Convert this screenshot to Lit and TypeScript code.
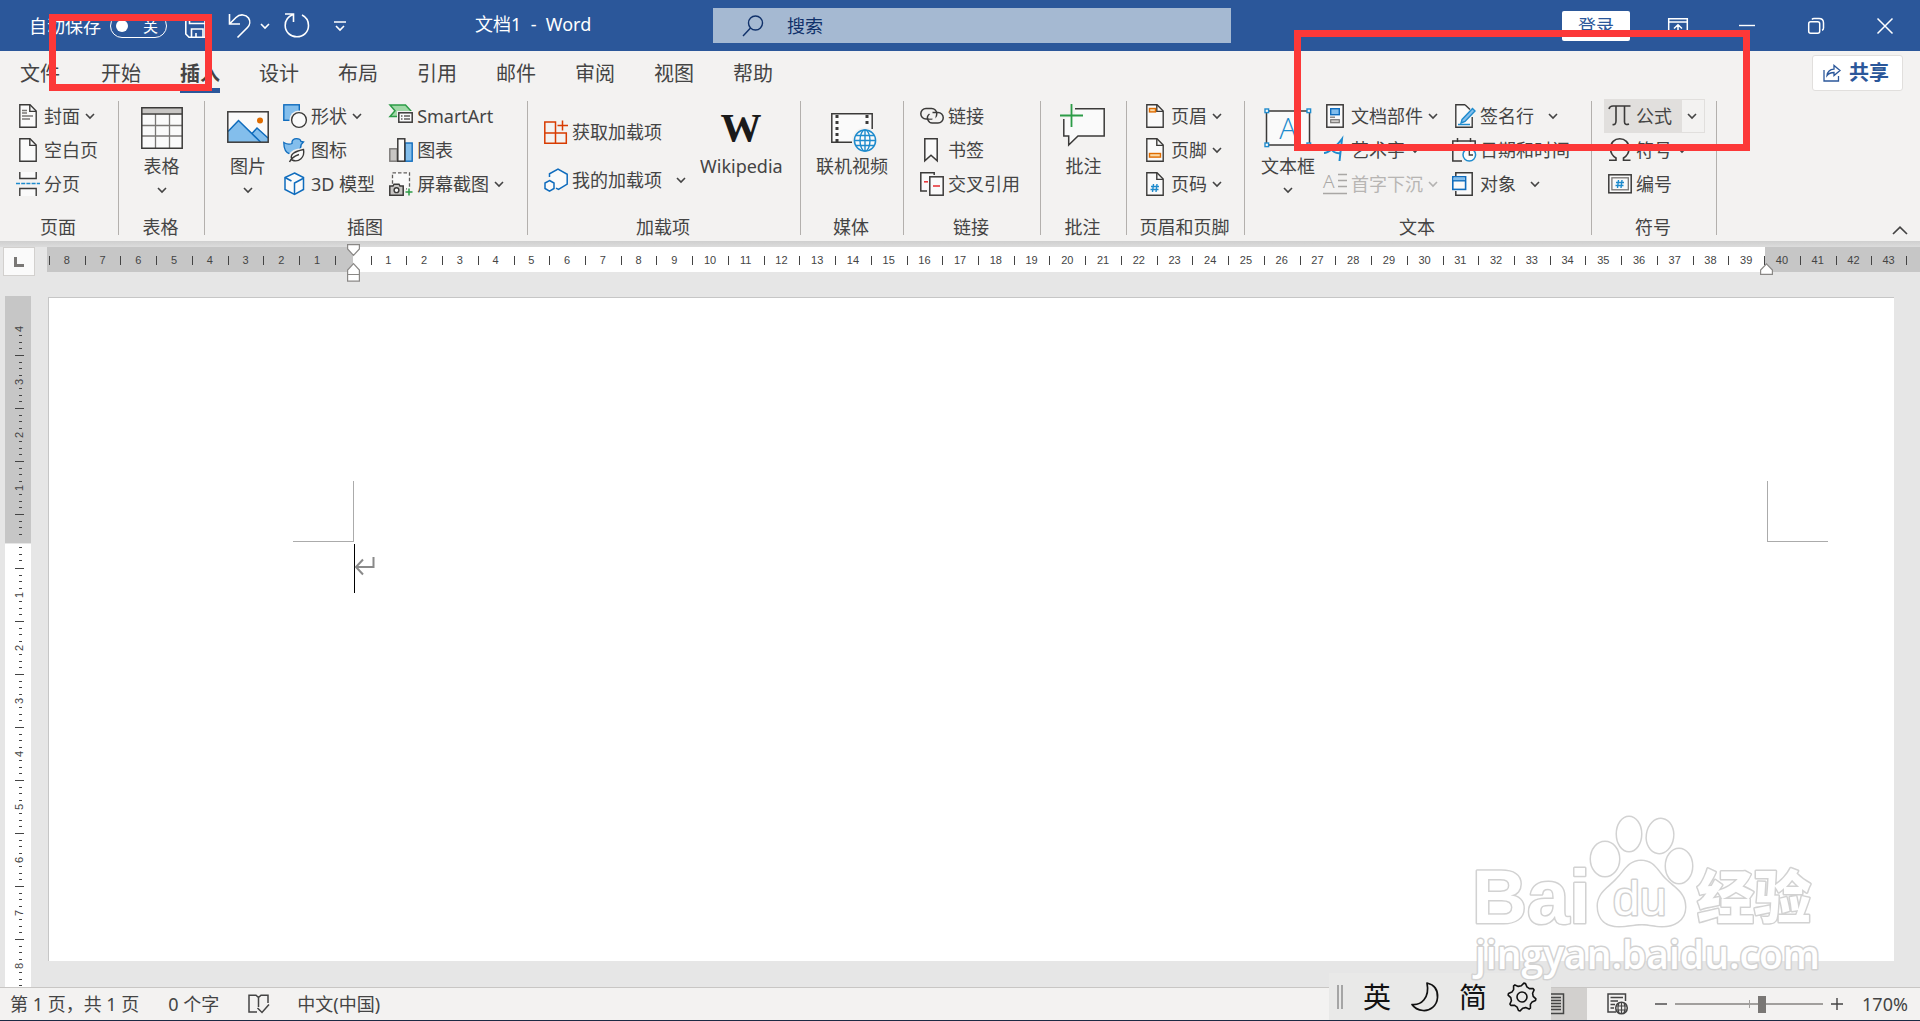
import { LitElement, html, svg, css, nothing, TemplateResult } from "lit";
import { customElement, state } from "lit/decorators.js";

type Svg = TemplateResult<2>;

interface Command {
  icon: Svg;
  text: string;
  menu?: boolean;
  wideMenu?: boolean;
  disabled?: boolean;
}

const draw = (w: number, h: number, body: unknown, cls = "") => html`
  <svg class=${cls} width=${w} height=${h} viewBox="0 0 ${w} ${h}" fill="none" aria-hidden="true">${body}</svg>
`;

const chevron = () => draw(10, 6, svg`<path d="M1 1 L5 5 L9 1" stroke="#444" stroke-width="1.6"/>`, "chev");

const sheet = svg`<path d="M3.8 .8 H14 L20.2 7 V23.2 H3.8 Z" fill="#fafafa" stroke="#3b3a39" stroke-width="1.4"/><path d="M13.8 1 V7.4 H20" stroke="#3b3a39" stroke-width="1.4"/>`;
const hash = (x: number, y: number) => svg`<path d="M${x + 2.5} ${y} l-1 8 M${x + 6} ${y} l-1 8 M${x} ${y + 2.5} h8 M${x - 0.5} ${y + 5.5} h8" stroke="#1e8bcd" stroke-width="1.4"/>`;

const icons = {
  cover: svg`${sheet}<path d="M6 6.5 h5 M6 9 h5 M6 12 h11 M6 15 h8" stroke="#797775" stroke-width="1.4"/>`,
  blank: sheet,
  pageBreak: svg`<path d="M3.8 0 V6.5 H20.2 V0 M3.8 24 V16.5 H20.2 V24" fill="#fafafa" stroke="#3b3a39" stroke-width="1.4"/><path d="M0 11.5 H24" stroke="#1e8bcd" stroke-width="1.6" stroke-dasharray="4 1.2"/>`,
  shapes: svg`<rect x=".8" y=".8" width="15.5" height="15.5" fill="#83beec" stroke="#0f6cbd" stroke-width="1.4"/><circle cx="16" cy="16" r="9.6" fill="#f3f2f1"/><circle cx="16" cy="16" r="7.4" fill="#fafafa" stroke="#3b3a39" stroke-width="1.4"/>`,
  pictos: svg`<path d="M.8 4.5 C4 6.5 7 6.5 9 5.5 C8.5 2 11 .7 13.5 .7 C16 .7 17.6 2 18 3.5 L20.5 4 L18.2 6.5 C18 12 13 16 7 16 C3 15 .8 11 .8 4.5 Z" fill="#83beec" stroke="#0f6cbd" stroke-width="1.3"/><path d="M5 24 C4 15 9 10 22 10 V17 C21 23 14 25 9 22 Z" fill="#f3f2f1"/><path d="M9 22 C6 16 12 13.5 20.5 11.5 C22 19 16 25 9 22 Z M6.5 24 C8 20.5 11.5 18 16 16.5" fill="#fafafa" stroke="#3b3a39" stroke-width="1.4"/>`,
  cube: svg`<path d="M11.5 1 L20.5 5.5 V17.5 L11.5 22.5 L2 17.5 V5.5 Z" fill="#fafafa" stroke="#0f6cbd" stroke-width="1.5"/><path d="M2 5.5 L8.5 9 M11.5 22 V11 L20 6.5" stroke="#0f6cbd" stroke-width="1.5"/>`,
  smartArt: svg`<path d="M1 1 H16.5 L22 7 V9 H9 V12.5 H1 L6 6.8 Z" fill="#9fd8a6" stroke="#2c9c47" stroke-width="1.5"/><rect x="8" y="7" width="16" height="12" fill="#f3f2f1"/><rect x="9.8" y="8.8" width="13.4" height="9.4" fill="#fafafa" stroke="#3b3a39" stroke-width="1.5"/><path d="M12 12 h1.5 M15 12 h6 M12 15 h1.5 M15 15 h6" stroke="#605e5c" stroke-width="1.3"/>`,
  chart: svg`<rect x=".8" y="10.8" width="7.4" height="12.4" fill="#c8c6c4" stroke="#797775" stroke-width="1.4"/><rect x="16" y="5" width="7.2" height="18.2" fill="#83beec" stroke="#0f6cbd" stroke-width="1.4"/><rect x="8.8" y=".8" width="7" height="22.4" fill="#fafafa" stroke="#3b3a39" stroke-width="1.5"/>`,
  screenshot: svg`<rect x="3.5" y=".8" width="17" height="16" fill="#fafafa" stroke="#605e5c" stroke-width="1.3" stroke-dasharray="3.5 2"/><path d="M.8 14 H4 L5 12.2 H10 L11 14 H14.2 V23.2 H.8 Z" fill="#c8c6c4" stroke="#3b3a39" stroke-width="1.5"/><circle cx="7.5" cy="18.2" r="2.4" fill="#fafafa" stroke="#3b3a39" stroke-width="1.4"/><path d="M20 16 V24 M16 20 H24" stroke="#f3f2f1" stroke-width="4"/><path d="M20 16.5 V23.5 M16.5 20 H23.5" stroke="#2c9c47" stroke-width="1.5"/>`,
  getAddins: svg`<path d="M.8 2 H11.5 V13 H22.3 V23.3 H.8 Z M.8 13 H11.5 V23.3" stroke="#d83b01" stroke-width="1.5"/><path d="M18.5 .5 V10.5 M13.5 5.5 H24" stroke="#d83b01" stroke-width="1.5"/>`,
  myAddins: svg`<path d="M5.5 9 V5.5 L14 1 L23 6.5 V16 L14.5 21.5 L12 20" fill="#fafafa"/><path d="M5.5 9 V5.8 L14 1 L23.2 6.3 V16.2 L14.5 21.5 L12 20.2" stroke="#0f6cbd" stroke-width="1.5"/><path d="M5.5 12.5 L10 15 V20.5 L5.5 23.2 L1 20.5 V15 Z" fill="#fafafa" stroke="#0f6cbd" stroke-width="1.5"/>`,
  link: svg`<rect x=".8" y="4.5" width="16" height="10.5" rx="5.2" stroke="#3b3a39" stroke-width="1.5"/><path d="M8.5 13 H14 V17" stroke="#f3f2f1" stroke-width="3"/><path d="M12.5 8.5 H18 A5 5 0 0 1 18 19 H13 A5 5 0 0 1 9.5 10" stroke="#3b3a39" stroke-width="1.5"/>`,
  bookmark: svg`<path d="M4.8 .8 H17.2 V22.8 L11 17.2 L4.8 22.8 Z" fill="#fafafa" stroke="#3b3a39" stroke-width="1.5"/>`,
  crossRef: svg`<path d="M7 19 H.8 V.8 H14.2 V3" fill="#fafafa" stroke="#3b3a39" stroke-width="1.5"/><path d="M4 9.8 h4" stroke="#e8383b" stroke-width="1.6"/><rect x="9.8" y="4.8" width="13.4" height="18.4" fill="#fafafa" stroke="#3b3a39" stroke-width="1.5"/><path d="M13 14 h7" stroke="#e8383b" stroke-width="1.6"/>`,
  header: svg`${sheet}<rect x="6.5" y="4.5" width="6" height="3.4" fill="#fbd9a5" stroke="#df6c00" stroke-width="1.4"/>`,
  footer: svg`${sheet}<rect x="6.5" y="15.5" width="11" height="3.6" fill="#fbd9a5" stroke="#df6c00" stroke-width="1.4"/>`,
  pageNumber: svg`${sheet}${hash(8, 12)}`,
  docParts: svg`<rect x="3.8" y=".8" width="16.4" height="22.4" fill="#fafafa" stroke="#3b3a39" stroke-width="1.5"/><rect x="7.7" y="4.7" width="8.6" height="6" fill="#83beec" stroke="#0f6cbd" stroke-width="1.4"/><path d="M7 13.2 h5" stroke="#797775" stroke-width="1.3"/><rect x="7.7" y="15.7" width="8.6" height="3" fill="#d2d0ce" stroke="#797775" stroke-width="1.2"/>`,
  wordArt: svg`<path d="M1 15 C5 15 14 8 19 1 L16.5 23 M7 10 C10 14 14 16 18 15" stroke="#1e8bcd" stroke-width="2"/>`,
  dropCap: svg`<text x="0" y="16" font-family="Noto Sans" font-weight="300" font-size="19" fill="#a19f9d">A</text><path d="M15 2.5 H24 M15 8.5 H24 M15 14.5 H24 M0 21.5 H24" stroke="#a19f9d" stroke-width="1.4"/>`,
  signature: svg`<path d="M13 .8 H3.8 V23.2 H20.2 V13 M13 .8 L18 5.5" fill="#fafafa" stroke="#3b3a39" stroke-width="1.4"/><path d="M10 15.5 L20.5 4.5 L23 7 L13 17.5 L9 19 Z" fill="#83beec" stroke="#1e8bcd" stroke-width="1.4"/><path d="M6 20.5 H18" stroke="#1e8bcd" stroke-width="1.5"/>`,
  dateTime: svg`<path d="M10 23 H.8 V3 H23.2 V12 M.8 7.5 H23.2 M5.5 0 V4 M18.5 0 V4" stroke="#3b3a39" stroke-width="1.5"/><circle cx="17.3" cy="16.8" r="6.3" fill="#fafafa" stroke="#1e8bcd" stroke-width="1.5"/><path d="M17.3 12.5 V17 H21" stroke="#3b3a39" stroke-width="1.3"/>`,
  object: svg`<path d="M3.8 4 V.8 H20.2 V23.2 H3.8 V19" fill="#fafafa" stroke="#3b3a39" stroke-width="1.5"/><rect x=".8" y="4.8" width="12.8" height="12.6" fill="#fafafa" stroke="#0f6cbd" stroke-width="1.6"/><rect x="1.6" y="5.6" width="11.2" height="3" fill="#83beec"/><path d="M.8 8.8 H13.6" stroke="#0f6cbd" stroke-width="1.4"/>`,
  equation: svg`<path d="M1 5 C1.5 2.5 3 2 5 2 H22.5 M8 2 V17 C8 20 6.5 21 4.5 20.5 M16.5 2 V18 C16.5 20.5 18.5 21 21 20" stroke="#3b3a39" stroke-width="1.6"/>`,
  symbol: svg`<path d="M1 22.2 H8 V20 C3 17 2.5 13 2.5 10.5 C2.5 4.5 6.5 .8 11.7 .8 C17 .8 21 4.5 21 10.5 C21 13 20.5 17 15.5 20 V22.2 H22.5" stroke="#3b3a39" stroke-width="1.6"/>`,
  numbering: svg`<rect x=".8" y="2.8" width="22.4" height="18" fill="#fafafa" stroke="#3b3a39" stroke-width="1.5"/><rect x="3.9" y="5.8" width="16.4" height="12" stroke="#797775" stroke-width="1.3"/>${hash(8, 8)}`,
};

const bigIcons = {
  table: svg`<rect x="3.8" y="8.8" width="40.4" height="40.4" fill="#fafafa"/><rect x="4" y="9" width="40" height="5.5" fill="#c8c6c4"/><path d="M4 26.5 H44 M4 37 H44 M17.5 15 V49 M31.5 15 V49" stroke="#797775" stroke-width="1.3"/><path d="M3.8 8.8 H44.2 V49.2 H3.8 Z M4 15 H44" stroke="#3b3a39" stroke-width="1.5"/>`,
  picture: svg`<rect x="3.8" y="12.8" width="40.4" height="30.4" fill="#fafafa"/><path d="M4 32.5 L14.5 21.5 L28 34.5 L33 29 L44 39 V43 H4 Z" fill="#83beec"/><path d="M4 32.5 L14.5 21.5 L36.5 43 M28 34.5 L33 29 L44 39" stroke="#0f6cbd" stroke-width="1.5"/><circle cx="36" cy="21.5" r="3" fill="#df6c00"/><rect x="3.8" y="12.8" width="40.4" height="30.4" stroke="#3b3a39" stroke-width="1.5"/>`,
  wikipedia: svg`<text x="24" y="42" text-anchor="middle" font-family="Liberation Serif" font-weight="700" font-size="41" fill="#1a1a1a">W</text>`,
  video: svg`<path d="M23 43.5 H3.8 V14.8 H44.2 V30" fill="#fafafa"/><path d="M24 43.2 H3.8 V14.8 H44.2 V30" stroke="#3b3a39" stroke-width="1.5"/><path d="M9 16 V43" stroke="#3b3a39" stroke-width="3" stroke-dasharray="3 3"/><path d="M39 16 V27" stroke="#3b3a39" stroke-width="3" stroke-dasharray="3 3"/><circle cx="37" cy="41.5" r="13" fill="#f3f2f1"/><circle cx="37" cy="41.5" r="10.6" fill="#fafafa" stroke="#1e8bcd" stroke-width="1.5"/><ellipse cx="37" cy="41.5" rx="5" ry="10.6" stroke="#1e8bcd" stroke-width="1.4"/><path d="M37 31 V52 M26.5 41.5 H47.5 M28 36.5 H46 M28 46.5 H46" stroke="#1e8bcd" stroke-width="1.4"/>`,
  comment: svg`<path d="M15 9.8 H44.2 V37 H18 L8.7 46 V37 H3.8 V20 L15 17 Z" fill="#fafafa"/><path d="M15 9.8 H44.2 V37 H18 L8.7 46 V37 H3.8 V20" stroke="#3b3a39" stroke-width="1.5"/><path d="M11.5 5 V28 M0 16.5 H23" stroke="#2c9c47" stroke-width="1.8"/>`,
  textBox: svg`<rect x="2.5" y="12" width="43" height="34" fill="#fafafa" stroke="#3b3a39" stroke-width="1.5"/><text x="24" y="40" text-anchor="middle" font-family="Open Sans" font-weight="300" font-size="29" fill="#1e8bcd">A</text>${[[1, 10], [43, 10], [1, 44], [43, 44]].map(([x, y]) => svg`<rect x=${x} y=${y} width="3.6" height="3.6" fill="#fafafa" stroke="#1e8bcd" stroke-width="1.4"/>`)}`,
};

@customElement("app-root")
export class AppRoot extends LitElement {
  @state() private activeTab = "插入";

  private tabs = ["文件", "开始", "插入", "设计", "布局", "引用", "邮件", "审阅", "视图", "帮助"];

  static styles = css`
    :host { display: block; }
    * { box-sizing: border-box; }
    button, input {
      font: inherit; color: inherit; background: none; border: 0; padding: 0; margin: 0;
    }
    svg { display: block; flex: none; overflow: visible; }
    .app {
      position: relative; display: flex; flex-direction: column;
      height: 100vh; overflow: hidden;
      font: 18px/26px "Noto Sans", "Noto Sans CJK SC", sans-serif;
      color: #444; background: #e6e6e6;
    }

    .titlebar {
      display: grid; grid-template-columns: 475px 238px 27% 1fr; align-items: center;
      flex: none; height: 51px; background: #2b579a; color: #fff;
    }
    .quick { display: flex; align-items: center; padding-left: 29px; height: 50px; }
    .autosave { display: flex; align-items: center; gap: 9px; }
    .track {
      display: flex; align-items: center; gap: 15px; width: 57px; height: 24px; padding-left: 5px;
      border: 1px solid #fff; border-radius: 12px; font-size: 15px; line-height: 20px;
    }
    .knob { appearance: none; width: 12px; height: 12px; border-radius: 50%; background: #fff; }
    .save { margin-left: 18px; }
    .undo { margin-left: 22px; }
    .undo-menu { margin-left: 8px; }
    .redo { margin-left: 14px; }
    .more { margin-left: 24px; }
    .title { margin: 0; font-size: 18px; font-weight: 400; white-space: pre; line-height: 46px; height: 50px; }
    .search {
      display: flex; align-items: center; gap: 23px; height: 35px; padding-left: 29px;
      background: #a5b9d2; color: #10316a;
    }
    .search input { flex: 1; min-width: 0; outline: 0; }
    .search input::placeholder { color: #10316a; opacity: 1; }
    .window { display: flex; justify-content: flex-end; align-items: center; padding-right: 25px; height: 50px; }
    .login { width: 68px; height: 30px; border-radius: 2px; background: #fff; color: #2b579a; margin-right: 38px; }
    .window .ctl { width: 20px; margin-right: 49px; }
    .window .ctl:last-child { margin-right: 0; }

    .tabrow { display: flex; justify-content: space-between; flex: none; height: 48px; background: #f3f2f1; padding: 4px 17px 0 20px; }
    .tabs { display: flex; gap: 39px; font-size: 20px; }
    .tab { height: 38px; line-height: 38px; padding-bottom: 5px; white-space: nowrap; }
    .tab:first-child { margin-right: 2px; }
    .tab.active { font-weight: 700; background: linear-gradient(#2b579a, #2b579a) bottom / 100% 5px no-repeat; }
    .share {
      display: flex; align-items: center; gap: 8px; height: 36px; padding: 0 13px 0 10px;
      border: 1px solid #e1dfdd; border-radius: 3px; background: #fff; color: #2b579a;
      font-size: 20px; font-weight: 700;
    }

    .ribbon {
      display: grid; flex: none; background: #f3f2f1;
      grid-template-columns: 119px 86px 323px 273px 103px 137px 86px 118px 347px 125px 1fr;
    }
    .group { background: linear-gradient(#b3b0ad, #b3b0ad) right 2px / 1px 134px no-repeat; }
    .items { display: flex; height: 102px; padding-left: 16px; }
    .items.mid { padding: 0 1px 0 0; justify-content: center; }
    .caption { margin: 0; padding: 13px 3px 1px 0; font-size: 18px; line-height: 26px; font-weight: 400; text-align: center; }
    .col { display: flex; flex-direction: column; align-items: flex-start; margin-right: 14px; }
    .col.two { padding-top: 16px; gap: 14px; }
    .cmd { display: flex; align-items: center; gap: 4px; height: 34px; white-space: nowrap; }
    .cmd .chev { margin-left: 1px; }
    .cmd.wide .chev { margin-left: 10px; }
    .cmd:disabled { opacity: .9; color: #b1afad; }
    .cmd:disabled .chev { opacity: .4; }
    .big { display: flex; flex-direction: column; align-items: center; min-width: 54px; margin-right: 8px; white-space: nowrap; }
    .mid .big { margin-right: 0; }
    .big svg:first-child + span { margin-bottom: 8px; }
    .split { display: flex; margin-left: -4px; }
    .split .cmd { padding: 0 9px 0 4px; background: #e1dfdd; }
    .split .drop { display: flex; align-items: center; justify-content: center; width: 24px; border: 1px solid #e1dfdd; }
    .split .drop .chev { margin-right: 2px; }
    .tail { display: flex; justify-content: flex-end; align-items: flex-end; padding: 0 12px 6px 0; }

    .rulerbar {
      display: flex; align-items: flex-start; flex: none; height: 55px; padding-top: 6px;
      background: linear-gradient(#cfcfcf, #dcdcdc 6px, #e6e6e6 6px);
    }
    .tabstop {
      display: flex; align-items: center; justify-content: center; flex: none;
      width: 32px; height: 29px; margin: 0 12px 0 3px; background: #fafafa; border: 1px solid #d2d0ce;
    }
    .hruler {
      position: relative; flex: 1; display: grid; grid-template-columns: repeat(52, minmax(0, 1fr));
      align-items: center; height: 25px; padding: 0 13px 0 2px;
      background: linear-gradient(90deg, #c6c6c6 306px, #fff 306px, #fff calc(100% - 155px), #c6c6c6 calc(100% - 155px));
      font: 11px/9px "Liberation Sans", sans-serif;
    }
    .hcell { height: 9px; border-left: 1px solid #444; padding-right: 1px; text-align: center; margin-top: 2px; }
    .hcell:last-of-type { border-right: 1px solid #444; }
    .marker { position: absolute; }
    .left-indent { left: 300px; top: -3px; }
    .right-indent { right: 147px; top: 16px; }

    .work { display: flex; flex: 1; min-height: 0; }
    .vruler {
      flex: none; width: 26px; margin-left: 5px; padding-top: 6px; overflow: hidden;
      background: linear-gradient(#c6c6c6 247px, #e6e6e6 247px, #e6e6e6 248px, #fff 248px);
      font: 11px "Liberation Sans", sans-serif;
    }
    .page { flex: 1; margin: 1px 26px 26px 17px; border: solid #c6c6c6; border-width: 1px 0 0 1px; background: #fff; }
    .corners { display: flex; justify-content: space-between; padding: 183px 66px 0 244px; }
    .corner { width: 61px; height: 61px; border: solid #ababab; border-width: 0 1px 1px 0; }
    .corner.right { border-width: 0 0 1px 1px; }
    .line { display: flex; margin: 2px 0 0 305px; }
    .caret { width: 1px; height: 49px; background: #000; }
    .mark { margin-top: 12px; }

    .status {
      display: flex; align-items: center; justify-content: space-between; flex: none; height: 34px;
      padding: 0 11px 0 10px; border-top: 1px solid #c8c6c4; border-bottom: 1px solid #1b2a44; background: #f3f2f1;
    }
    .facts, .view { display: flex; align-items: center; height: 32px; }
    .facts { gap: 29px; }
    .layout { display: flex; align-items: center; width: 46px; height: 32px; padding-left: 4px; background: #d2d0ce; }
    .web { margin: 0 27px 0 20px; }
    .zoom {
      appearance: none; width: 148px; height: 18px; margin: 0 8px;
      background:
        linear-gradient(#a19f9d, #a19f9d) 74px center / 1px 8px no-repeat,
        linear-gradient(#a19f9d, #a19f9d) 0 center / 100% 2px no-repeat;
    }
    .zoom::-webkit-slider-thumb { appearance: none; width: 8px; height: 17px; background: #797775; }
    .percent { width: 48px; margin-left: 18px; }

    .ime {
      position: absolute; right: 369px; bottom: 1px; width: 222px; height: 47px;
      display: flex; align-items: center; gap: 20px; padding-left: 8px;
      background: #e9e9e8; color: #111; font-size: 28px; line-height: 40px;
    }
    .grip { width: 6px; height: 24px; border: solid #a5a5a5; border-width: 0 2px; }
    .watermark { position: absolute; right: 90px; bottom: 31px; pointer-events: none; }
    .frame { position: absolute; border: 7px solid #fc3838; pointer-events: none; }
    .frame.first { left: 49px; top: 14px; width: 163px; height: 77px; }
    .frame.second { left: 1294px; top: 30px; width: 456px; height: 121px; }
  `;

  private command(c: Command) {
    return html`<button class="cmd ${c.wideMenu ? "wide" : ""}" ?disabled=${c.disabled}>
      ${draw(24, 24, c.icon)}<span>${c.text}</span>${c.menu || c.wideMenu ? chevron() : nothing}
    </button>`;
  }

  private column(list: Command[], cls = "") {
    return html`<div class="col ${cls}">${list.map((c) => this.command(c))}</div>`;
  }

  private big(icon: Svg, text: string, menu = false) {
    return html`<button class="big">${draw(48, 54, icon)}<span>${text}</span>${menu ? chevron() : nothing}</button>`;
  }

  private group(caption: string, content: unknown, mid = false) {
    return html`<section class="group">
      <div class="items ${mid ? "mid" : ""}">${content}</div>
      <h2 class="caption">${caption}</h2>
    </section>`;
  }

  private titleBar() {
    const white = "#fff";
    return html`<header class="titlebar">
      <div class="quick">
        <label class="autosave"><span>自动保存</span>
          <span class="track"><input class="knob" type="checkbox" role="switch" aria-label="自动保存" />关</span>
        </label>
        <button class="save" aria-label="保存">${draw(21, 24, svg`<path d="M.8 .8 H20 V23.2 H4 L.8 20 Z M4.5 1 V9.5 H20 M6.5 23 V15 H18 V23 M11 19 V23" stroke=${white} stroke-width="1.6"/>`)}</button>
        <button class="undo" aria-label="撤消">${draw(24, 24, svg`<path d="M1.5 0 V10 H12 M2 9.5 L8 3.5 C12 -.5 18 .5 20.5 4 C22.5 7 22 11 19.5 13.5 L9.5 23.5" stroke=${white} stroke-width="1.6"/>`)}</button>
        <button class="undo-menu" aria-label="撤消选项">${draw(10, 6, svg`<path d="M1 1 L5 5 L9 1" stroke=${white} stroke-width="1.6"/>`)}</button>
        <button class="redo" aria-label="重复">${draw(26, 25, svg`<path d="M1 1 H9.5 V9 M9 1.5 C4 3.5 1.2 7.5 1.2 12.5 C1.2 19 6.5 23.8 12.8 23.8 C19.5 23.8 24.5 19 24.5 12.5 C24.5 8 22 4 18 2" stroke=${white} stroke-width="1.6"/>`)}</button>
        <button class="more" aria-label="自定义快速访问工具栏">${draw(12, 10, svg`<path d="M0 1 H12 M2 5 L6 9 L10 5" stroke=${white} stroke-width="1.6"/>`)}</button>
      </div>
      <h1 class="title">文档1  -  Word</h1>
      <label class="search">
        ${draw(22, 22, svg`<circle cx="13.5" cy="8" r="7" stroke="#10316a" stroke-width="1.4"/><path d="M8.5 13 L1 21" stroke="#10316a" stroke-width="1.4"/>`)}
        <input type="text" placeholder="搜索" aria-label="搜索" />
      </label>
      <div class="window">
        <button class="login">登录</button>
        <button class="ctl" aria-label="功能区显示选项">${draw(20, 20, svg`<path d="M.7 2.7 H19.3 V18 H.7 Z M.7 6 H19.3 M10 17 V9 M6 12.5 L10 8.8 L14 12.5" stroke=${white} stroke-width="1.5"/>`)}</button>
        <button class="ctl" aria-label="最小化">${draw(20, 20, svg`<path d="M2 9.5 H18" stroke=${white} stroke-width="1.4"/>`)}</button>
        <button class="ctl" aria-label="还原">${draw(20, 20, svg`<rect x="2.7" y="5.7" width="11" height="11.5" rx="2" stroke=${white} stroke-width="1.5"/><path d="M6 3.5 C6.5 2.7 7 2.5 8 2.5 H13 C16 2.5 17.5 4 17.5 7 V12 C17.5 13.2 17 14 16 14.3" stroke=${white} stroke-width="1.5"/>`)}</button>
        <button class="ctl" aria-label="关闭">${draw(20, 20, svg`<path d="M2.5 2.5 L17.5 17.5 M17.5 2.5 L2.5 17.5" stroke=${white} stroke-width="1.5"/>`)}</button>
      </div>
    </header>`;
  }

  private ribbon() {
    const i = icons;
    return html`<div class="ribbon">
      ${this.group("页面", this.column([
        { icon: i.cover, text: "封面", menu: true },
        { icon: i.blank, text: "空白页" },
        { icon: i.pageBreak, text: "分页" },
      ]))}
      ${this.group("表格", this.big(bigIcons.table, "表格", true), true)}
      ${this.group("插图", [
        this.big(bigIcons.picture, "图片", true),
        this.column([
          { icon: i.shapes, text: "形状", menu: true },
          { icon: i.pictos, text: "图标" },
          { icon: i.cube, text: "3D 模型" },
        ]),
        this.column([
          { icon: i.smartArt, text: "SmartArt" },
          { icon: i.chart, text: "图表" },
          { icon: i.screenshot, text: "屏幕截图", menu: true },
        ]),
      ])}
      ${this.group("加载项", [
        this.column([
          { icon: i.getAddins, text: "获取加载项" },
          { icon: i.myAddins, text: "我的加载项", wideMenu: true },
        ], "two"),
        this.big(bigIcons.wikipedia, "Wikipedia"),
      ])}
      ${this.group("媒体", this.big(bigIcons.video, "联机视频"), true)}
      ${this.group("链接", this.column([
        { icon: i.link, text: "链接" },
        { icon: i.bookmark, text: "书签" },
        { icon: i.crossRef, text: "交叉引用" },
      ]))}
      ${this.group("批注", this.big(bigIcons.comment, "批注"), true)}
      ${this.group("页眉和页脚", this.column([
        { icon: i.header, text: "页眉", menu: true },
        { icon: i.footer, text: "页脚", menu: true },
        { icon: i.pageNumber, text: "页码", menu: true },
      ]))}
      ${this.group("文本", [
        this.big(bigIcons.textBox, "文本框", true),
        this.column([
          { icon: i.docParts, text: "文档部件", menu: true },
          { icon: i.wordArt, text: "艺术字", menu: true },
          { icon: i.dropCap, text: "首字下沉", menu: true, disabled: true },
        ]),
        this.column([
          { icon: i.signature, text: "签名行", wideMenu: true },
          { icon: i.dateTime, text: "日期和时间" },
          { icon: i.object, text: "对象", wideMenu: true },
        ]),
      ])}
      ${this.group("符号", html`<div class="col">
        <div class="split">${this.command({ icon: i.equation, text: "公式" })}<button class="drop" aria-label="公式选项">${chevron()}</button></div>
        ${this.command({ icon: i.symbol, text: "符号", menu: true })}
        ${this.command({ icon: i.numbering, text: "编号" })}
      </div>`)}
      <div class="tail"><button aria-label="折叠功能区">${draw(16, 9, svg`<path d="M1 8 L8 1.2 L15 8" stroke="#444" stroke-width="1.7"/>`)}</button></div>
    </div>`;
  }

  private horizontalRuler() {
    const marks = Array.from({ length: 52 }, (_, n) => Math.abs(n - 8));
    return html`<div class="rulerbar">
      <button class="tabstop" aria-label="左对齐制表符">${draw(10, 10, svg`<path d="M1.5 0 V8.5 H10" stroke="#797775" stroke-width="3"/>`)}</button>
      <div class="hruler">
        ${marks.map((m) => html`<div class="hcell">${m || nothing}</div>`)}
        ${draw(13, 38, svg`<path d="M.6 .6 H12.4 V5 L6.5 11.4 L.6 5 Z M6.5 19.6 L12.4 26 V37.2 H.6 V26 Z M.6 30.5 H12.4" fill="#fff" stroke="#8a8886" stroke-width="1.2"/>`, "marker left-indent")}
        ${draw(13, 12, svg`<path d="M6.5 .8 L12.4 7 V11.4 H.6 V7 Z" fill="#fff" stroke="#8a8886" stroke-width="1.2"/>`, "marker right-indent")}
      </div>
    </div>`;
  }

  private verticalRuler() {
    const marks = [4, 3, 2, 1, 0, 1, 2, 3, 4, 5, 6, 7, 8];
    return html`<div class="vruler">
      ${marks.map((m, n) => draw(26, m ? 53 : 54, svg`
        ${n ? svg`<path d="M10 .5 H19 M14 7.5 H17 M14 13.5 H17 M14 20.5 H17" stroke="#444"/>` : nothing}
        ${m ? svg`<text transform="translate(18 27) rotate(-90)" text-anchor="middle" fill="#444">${m}</text>` : nothing}
        <path d="M14 33.5 H17 M14 40.5 H17 M14 46.5 H17" stroke="#444"/>`))}
    </div>`;
  }

  private statusBar() {
    return html`<footer class="status">
      <div class="facts">
        <span>第 1 页，共 1 页</span><span>0 个字</span>
        ${draw(20, 21, svg`<path d="M9 18 H1 V1.2 H8 L10.5 3.5 L13 1.2 H20 V9 M10.5 3.5 V13 M9.5 14 L14 18.5 L21 10.5" stroke="#444" stroke-width="1.5"/>`)}
        <span>中文(中国)</span>
      </div>
      <div class="view">
        <button class="layout" aria-label="页面视图">${draw(20, 22, svg`<path d="M1 1 H18.5 V20.5 H1 Z M4 4.5 H16 M4 7.5 H16 M4 10.5 H16 M4 13.5 H16 M4 16.5 H16" stroke="#444" stroke-width="1.5"/>`)}</button>
        <button class="web" aria-label="Web 版式视图">${draw(21, 22, svg`<path d="M9 19 H1 V1 H18.5 V8 M3.5 4.5 H16 M3.5 8 H11 M3.5 11.5 H8 M3.5 15 H7" stroke="#444" stroke-width="1.5"/><circle cx="14.5" cy="15" r="5.8" fill="#f3f2f1" stroke="#444" stroke-width="1.5"/><path d="M14.5 9 V21 M9 13 H20 M9 17 H20 M12 10 C10.8 13 10.8 17 12 20 M17 10 C18.2 13 18.2 17 17 20" stroke="#444" stroke-width="1.2"/>`)}</button>
        <button aria-label="缩小">${draw(12, 12, svg`<path d="M0 6 H12" stroke="#444" stroke-width="1.4"/>`)}</button>
        <input class="zoom" type="range" min="0" max="100" value="59" aria-label="显示比例" />
        <button aria-label="放大">${draw(12, 12, svg`<path d="M0 6 H12 M6 0 V12" stroke="#444" stroke-width="1.4"/>`)}</button>
        <button class="percent">170%</button>
      </div>
    </footer>`;
  }

  private inputMethod() {
    const teeth = Array.from({ length: 32 }, (_, n) => {
      const r = n % 4 < 2 ? 14 : 11.2;
      const spread = n % 4 === 0 || n % 4 === 3 ? 0.3 : 0.7;
      const a = ((n + 1 - spread) * Math.PI) / 16;
      return `${(15 + r * Math.cos(a)).toFixed(1)},${(15 + r * Math.sin(a)).toFixed(1)}`;
    }).join(" ");
    return html`<div class="ime">
      <span class="grip"></span><span>英</span>
      ${draw(28, 30, svg`<path d="M16 1 C24 3 27 9 26.5 15.5 C26 24 19 29 12 28.5 C7 28 3 25.5 1 22.5 C10 23.5 19 16 16 1 Z" stroke="#111" stroke-width="1.7" stroke-linejoin="round"/>`)}
      <span>简</span>
      ${draw(30, 30, svg`<polygon points=${teeth} stroke="#111" stroke-width="1.6" stroke-linejoin="round"/><circle cx="15" cy="15" r="5" stroke="#111" stroke-width="1.6"/>`)}
    </div>`;
  }

  private watermark() {
    const toes = [[135, 49, 14, 17, 0], [159, 24, 12, 17, 0], [190, 26, 13, 17, 8], [209, 56, 13, 17, 0]];
    return draw(360, 180, svg`<g fill="#fff" stroke="#d2d2d2" stroke-width="3" stroke-linejoin="round" paint-order="stroke">
      ${toes.map(([x, y, rx, ry, a]) => svg`<ellipse cx=${x} cy=${y} rx=${rx} ry=${ry} transform="rotate(${a} ${x} ${y})"/>`)}
      <path d="M171 51 C184 51 187 61 195 69 C205 79 215 83 215 97 C215 111 203 116 192 116 C184 116 180 114 172 114 C163 114 158 116 149 116 C137 116 128 110 128 96 C128 83 139 78 147 69 C155 61 159 51 171 51 Z"/>
      <text x="2" y="113" font-family="Liberation Sans" font-weight="700" font-size="76">Bai</text>
      <text x="143" y="105" font-family="Liberation Sans" font-size="48">du</text>
      <text x="227" y="108" font-family="Noto Sans CJK SC" font-weight="900" font-size="57">经验</text>
      <text x="5" y="159" font-family="Open Sans" font-weight="600" font-size="39">jingyan.baidu.com</text>
    </g>`, "watermark");
  }

  render() {
    return html`<div class="app">
      ${this.titleBar()}
      <div class="tabrow">
        <nav class="tabs">
          ${this.tabs.map((t) => html`<button class="tab ${t === this.activeTab ? "active" : ""}" @click=${() => (this.activeTab = t)}>${t}</button>`)}
        </nav>
        <button class="share">${draw(18, 18, svg`<path d="M1 6 V17 H15.5 V12 M4 11.5 C4.5 7.5 7 5.5 11 5.2 V1.5 L17 6.5 L11 11.5 V8.5 C8 8.5 6 9 4 11.5 Z" stroke="#2b579a" stroke-width="1.3"/>`)}<span>共享</span></button>
      </div>
      ${this.ribbon()}
      ${this.horizontalRuler()}
      <main class="work">
        ${this.verticalRuler()}
        <article class="page">
          <div class="corners"><div class="corner"></div><div class="corner right"></div></div>
          <div class="line">
            <div class="caret"></div>
            ${draw(20, 20, svg`<path d="M18.5 1 V11 H1 M8 3.5 L1 11 L8 18.5" stroke="#8a8a8a" stroke-width="2"/>`, "mark")}
          </div>
        </article>
      </main>
      ${this.statusBar()}
      ${this.inputMethod()}
      ${this.watermark()}
      <div class="frame first"></div>
      <div class="frame second"></div>
    </div>`;
  }
}
